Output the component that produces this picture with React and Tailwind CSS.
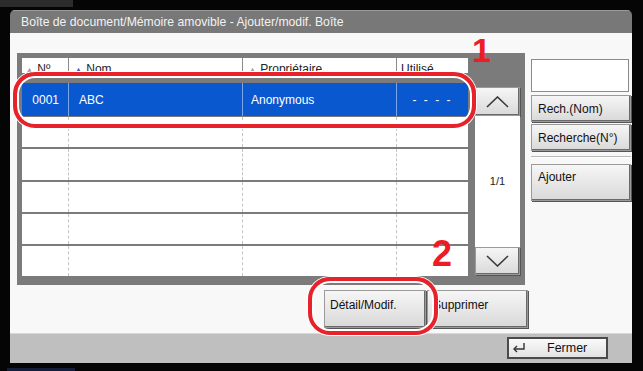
import React from "react";

const font = { fontFamily: '"Liberation Sans", Arial, sans-serif' };

function Chevron({ up }) {
  return (
    <svg width="23" height="12" viewBox="0 0 23 12" fill="none">
      <path
        d={up ? "M1 11 L11.5 1 L22 11" : "M1 1 L11.5 11 L22 1"}
        stroke="#3a3a3a"
        strokeWidth="1.6"
      />
    </svg>
  );
}

function Btn({ children, className = "" }) {
  return (
    <div
      className={
        "bg-gradient-to-b from-[#f6f6f6] to-[#d9d9d9] border border-[#9a9a9a] shadow-[inset_-1px_-1px_0_#6a6a6a,1px_1px_0_#555] text-[#111] text-[12px] " +
        className
      }
    >
      {children}
    </div>
  );
}

export default function App() {
  const blankRows = [0, 1, 2, 3, 4];
  return (
    <div
      className="w-[643px] h-[371px] bg-[#050505] overflow-hidden flex flex-col relative"
      style={font}
    >
      {/* top strip */}
      <div className="h-[10px] flex">
        <div className="w-[73px] h-[7px] bg-[#2c2c2c]" />
      </div>
      {/* middle */}
      <div className="h-[353px] flex">
        <div className="w-[10px]" />
        {/* window */}
        <div className="w-[622px] h-[353px] flex flex-col rounded-t-[5px] overflow-hidden">
          <div className="h-[23px] bg-[#787878] text-[#f2f2f2] text-[12.2px] flex items-center pl-[11px] border-t border-[#9a9a9a]">
            Boîte de document/Mémoire amovible - Ajouter/modif. Boîte
          </div>
          <div className="h-[300px] bg-[#f8f8f8] flex flex-col">
            <div className="flex items-start pt-[20px]">
              {/* gray panel */}
              <div className="ml-[7px] w-[508px] h-[232px] bg-[#7b7b7b] p-[5px] flex items-start">
                {/* table */}
                <div className="w-[446px] h-[218px] flex flex-col">
                  {/* header */}
                  <div className="h-[15px] flex overflow-hidden text-[12px] text-[#222] bg-white">
                    <div className="w-[47px] border-r border-[#8a8a8a] pl-[3px] pt-[4px] leading-[14px] whitespace-nowrap">
                      <span className="text-[#a0a0a0] text-[9px] align-middle">▲</span> Nº
                    </div>
                    <div className="w-[174px] border-r border-[#8a8a8a] pl-[5px] pt-[4px] leading-[14px] whitespace-nowrap">
                      <span className="text-[#2f5fbf] text-[9px] align-middle">▲</span> Nom
                    </div>
                    <div className="w-[154px] border-r border-[#8a8a8a] pl-[5px] pt-[4px] leading-[14px] whitespace-nowrap">
                      <span className="text-[#a0a0a0] text-[9px] align-middle">▲</span> Propriétaire
                    </div>
                    <div className="flex-1 pl-[4px] pt-[4px] leading-[14px] whitespace-nowrap">
                      Utilisé
                    </div>
                  </div>
                  <div className="h-[10px]" />
                  {/* selected row */}
                  <div className="h-[33px] bg-[#0a58cf] flex items-center text-white text-[12px]">
                    <div className="w-[47px] text-right pr-[9px] h-full flex items-center justify-end border-r border-[#7aa6ea]">
                      0001
                    </div>
                    <div className="w-[174px] pl-[10px] h-full flex items-center border-r border-[#7aa6ea]">
                      ABC
                    </div>
                    <div className="w-[154px] pl-[8px] h-full flex items-center border-r border-[#7aa6ea]">
                      Anonymous
                    </div>
                    <div className="flex-1 h-full flex items-center justify-center tracking-[2px]">
                      - - - -
                    </div>
                  </div>
                  {blankRows.map((i) => (
                    <div
                      key={i}
                      className={
                        "flex bg-white " +
                        (i === 0 ? "h-[31px] border-t border-[#7b7b7b]" : i === 1 ? "h-[33px] border-t-2 border-[#7b7b7b]" : "h-[32px] border-t-2 border-[#7b7b7b]")
                      }
                    >
                      <div className="w-[47px] border-r border-dashed border-[#c4c4c4]" />
                      <div className="w-[174px] border-r border-dashed border-[#c4c4c4]" />
                      <div className="w-[154px] border-r border-dashed border-[#c4c4c4]" />
                      <div className="flex-1" />
                    </div>
                  ))}
                </div>
                {/* scroll column */}
                <div className="ml-[7px] w-[45px] h-[217px] flex flex-col">
                  <div className="h-[29px]" />
                  <Btn className="h-[29px] flex items-center justify-center">
                    <Chevron up />
                  </Btn>
                  <div className="h-[131px] bg-white flex items-center justify-center text-[11px] text-[#222]">
                    1/1
                  </div>
                  <Btn className="h-[28px] flex items-center justify-center">
                    <Chevron />
                  </Btn>
                </div>
              </div>
              {/* right panel */}
              <div className="ml-[6px] w-[100px] mt-[6px] flex flex-col">
                <div className="w-[98px] h-[33px] bg-white border border-[#8c8c8c]" />
                <Btn className="mt-[3px] h-[27px] flex items-center pl-[6px]">Rech.(Nom)</Btn>
                <Btn className="mt-[2px] h-[27px] flex items-center pl-[6px]">Recherche(N°)</Btn>
                <div className="mt-[5px] h-[2px] bg-[#b8b8b8] border-b border-white" />
                <Btn className="mt-[6px] h-[37px] pl-[6px] pt-[3px]">Ajouter</Btn>
              </div>
            </div>
            {/* bottom buttons */}
            <div className="flex pl-[314px] mt-[5px]">
              <Btn className="w-[102px] h-[38px] pl-[5px] pt-[5px]">Détail/Modif.</Btn>
              <Btn className="ml-[1px] w-[101px] h-[38px] pl-[5px] pt-[5px]">Supprimer</Btn>
            </div>
          </div>
          {/* status bar */}
          <div className="h-[30px] bg-[#bfbfbf] border-t border-[#d8d8d8] flex items-start pl-[497px] pt-[3px]">
            <div className="w-[101px] h-[22px] bg-gradient-to-b from-[#fafafa] to-[#e2e2e2] border-2 border-[#4a4a4a] flex items-center text-[12.5px] text-[#111]">
              <svg width="14" height="12" viewBox="0 0 14 12" className="ml-[3px]" fill="none">
                <path d="M12 1 V7 H2" stroke="#333" strokeWidth="1.4" />
                <path d="M5 4 L2 7 L5 10" stroke="#333" strokeWidth="1.4" />
              </svg>
              <span className="ml-[21px]">Fermer</span>
            </div>
          </div>
        </div>
      </div>
      <div className="h-[8px] flex items-end">
        <div className="ml-[7px] w-[68px] h-[3px] bg-[#141d3a]" />
      </div>

      {/* annotations */}
      <div className="absolute left-[13px] top-[72px] w-[463px] h-[56px] rounded-[22px] border-[4px] border-[#e8222b] shadow-[inset_0_0_0_2px_#ffffff,0_0_0_1px_#ffffff]" />
      <div className="absolute left-[308px] top-[277px] w-[130px] h-[58px] rounded-[22px] border-[4px] border-[#e8222b] shadow-[inset_0_0_0_2px_#ffffff,0_0_0_1px_#ffffff]" />
      <div className="absolute left-[472px] top-[33px] text-[34px] leading-none font-bold text-[#ee1c24]">1</div>
      <div className="absolute left-[432px] top-[236px] text-[36px] leading-none font-bold text-[#ee1c24]">2</div>
    </div>
  );
}
